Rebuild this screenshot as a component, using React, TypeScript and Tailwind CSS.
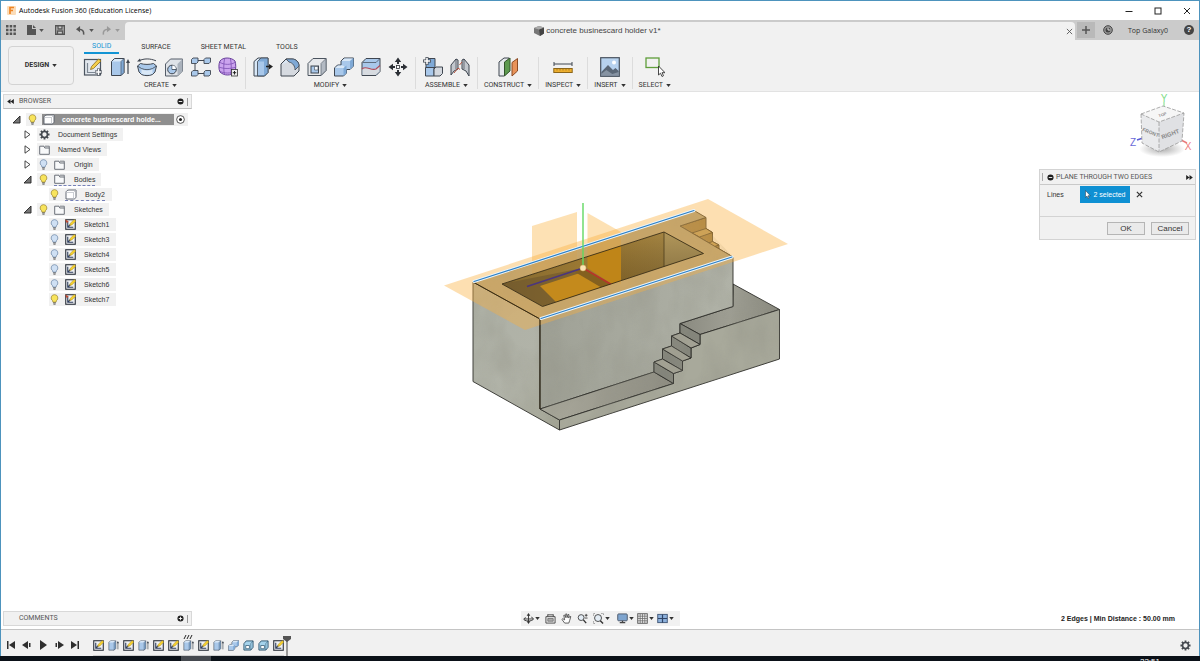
import React from "react"

type IconProps={className?:string}
const INK="#3f4650"
const BLUE="#a9c8ea"
const LIGHT="#d9e8f7"
const MID="#7fa9d6"

const Caret=({className="text-[#333]"}:IconProps)=>(
    <svg viewBox="0 0 6 4" className={`w-[5px] h-[3px] shrink-0 ${className}`} fill="currentColor"><path d="M0 0h6L3 4z"/></svg>
)

/* ---------- feature icons ---------- */
const Sketch=({className="w-5 h-5"}:IconProps)=>(
    <svg viewBox="0 0 20 20" className={className}>
        <rect x="1.5" y="2.5" width="16" height="15.5" fill="#e3e8ee" stroke="#4b545f" strokeWidth="1.2"/>
        <path d="M4.500 6v9.500h9" fill="none" stroke="#7d8793" strokeWidth="1.200"/>
        <path d="M7.500 12.500l1-3 7-7.500 2.500 2-7.500 7.500z" fill="#f5cf4b" stroke="#8a6d1c" strokeWidth=".8"/>
        <path d="M15.500 11.500v7M12 15h7" stroke={INK} strokeWidth="3"/>
        <path d="M15.500 12v6M12.500 15h6" stroke="#fff" strokeWidth="1.600"/>
    </svg>
)
const SmallSketch=({className="w-[11px] h-[11px]",pinned=false}:IconProps & {pinned?:boolean})=>(
    <svg viewBox="0 0 12 12" className={`shrink-0 ${className}`}>
        <rect x=".8" y=".8" width="10.400" height="10.400" fill="#f0f2f4" stroke="#2d333c" strokeWidth="1.200"/>
        <path d="M3 3v6h6M3 9l3-3" fill="none" stroke="#2e3d5c" strokeWidth="1.200"/>
        <path d="M5 7l1-2.500L10 .5 11.800 2.200 7.500 6.500z" fill="#f6d12f" stroke="#a38318" strokeWidth=".5"/>
        {pinned ? <path d="M0 .5l4 2-2 2z" fill="#c2492f"/> : null}
    </svg>
)
const Extrude=({className="w-5 h-5"}:IconProps)=>(
    <svg viewBox="0 0 20 20" className={`shrink-0 ${className}`}>
        <path d="M1.500 4.500l3-3H14v14l-3 3H1.500z" fill={BLUE} stroke={INK}/>
        <path d="M2 4.500l3-2.500h8.500L11 4.500z" fill={LIGHT}/>
        <path d="M11 4.500l3-3v14l-3 3z" fill={MID} stroke={INK} strokeWidth=".6"/>
        <path d="M18 17V4" stroke={INK} strokeWidth="1.200"/>
        <path d="M16 6l2-4 2 4z" fill={INK}/>
    </svg>
)
const Revolve=()=>(
    <svg viewBox="0 0 20 20" className="w-5 h-5">
        <path d="M.5 9l3-2.500c4 1.200 9 1.200 13 0L19.500 9l-1.500 6-2.500 2.500c-3.500 1.500-7.500 1.500-11 0L2 15z" fill={BLUE} stroke={INK}/>
        <path d="M.5 9l4 2.500c3.500 1.500 7.500 1.500 11 0l4-2.500" fill="none" stroke={INK} strokeWidth=".8"/>
        <path d="M4.500 12.500c4 1.200 7 1.200 11 0v4.300c-4 1.200-7 1.200-11 0z" fill={LIGHT}/>
        <path d="M2 3.800c5-2.500 11-2.500 17 0" fill="none" stroke={INK}/>
        <path d="M0 4.600l3-3 .8 3z" fill={INK}/>
    </svg>
)
const Hole=()=>(
    <svg viewBox="0 0 20 20" className="w-5 h-5">
        <path d="M1.500 7l5-5h12v12l-5 5h-12z" fill="#dfe3e8" stroke="#555d68"/>
        <path d="M13.500 7l5-5v12l-5 5z" fill="#aab2bc"/>
        <circle cx="8" cy="12.500" r="4.300" fill={BLUE} stroke={INK}/>
        <path d="M8 8.200v4.300h4.300" fill="none" stroke={INK} strokeWidth=".8"/>
        <path d="M8.400 8.600a4 4 0 0 1 3.500 3.500H8.400z" fill="#fff"/>
    </svg>
)
const Pattern=()=>(
    <svg viewBox="0 0 20 20" className="w-5 h-5">
        <path d="M4 6v7M7 3.500h6M7 16.500h6" stroke={INK}/>
        <g fill={BLUE} stroke={INK} strokeWidth=".9">
            <path d="M.5 2.500l1.500-1.500h5v4L5.500 6.500h-5z"/>
            <path d="M13 2.500L14.500 1h5v4L18 6.500h-5z"/>
            <path d="M.5 15l1.500-1.500h5v4L5.500 19h-5z"/>
            <path d="M13 15l1.500-1.500h5v4L18 19h-5z"/>
        </g>
    </svg>
)
const FormIcon=()=>(
    <svg viewBox="0 0 20 20" className="w-5 h-5">
        <path d="M2 4c3-4 11-4 15 0 1 3 1 8 0 11-4 4-11 4-15 0-1.500-3-1.500-8 0-11z" fill="#cba3ee" stroke="#68409a"/>
        <path d="M2 5.500c5 2.500 10 2.500 15 0M1 10c5 2 11 2 17 0M2 14.500c5 2 10 2 15 0M6.500 2c-1 5-1 11 0 16M12.500 2c1 5 1 11 0 16" fill="none" stroke="#7d50b4" strokeWidth=".8"/>
        <rect x="13.500" y="12.500" width="6" height="6.500" fill="#eee" stroke="#333" strokeWidth=".8"/>
        <path d="M16.500 14v3.500M14.800 15.700h3.400" stroke="#222"/>
    </svg>
)
const PressPull=()=>(
    <svg viewBox="0 0 20 20" className="w-5 h-5">
        <path d="M1 4.500l4-3.500h10v14.500L11.500 19H1z" fill={LIGHT} stroke={INK}/>
        <path d="M4.500 4.500L8 1h7v14.500L11.500 19h-7z" fill={MID} stroke={INK} strokeWidth=".8"/>
        <path d="M5 4.500h6V18H5z" fill={BLUE}/>
        <path d="M13 9.500h3" stroke="#222" strokeWidth="1.500"/><path d="M16 7l4 2.500-4 3z" fill="#222"/>
    </svg>
)
const Fillet=()=>(
    <svg viewBox="0 0 20 20" className="w-5 h-5">
        <path d="M1 7l5-5h6c4 0 7 3 7 7v5l-5 5H1z" fill="#d6dae0" stroke={INK}/>
        <path d="M6 2h6c4 0 7 3 7 7l-4 4c0-4-2-7-6-8z" fill={MID} stroke={INK} strokeWidth=".8"/>
        <path d="M2 7.500l4-4L8 5C5 6 3 7 2 7.500z" fill={LIGHT}/>
    </svg>
)
const Shell=()=>(
    <svg viewBox="0 0 20 20" className="w-5 h-5">
        <path d="M1 6.500l5-5h13v12l-5 5H1z" fill="#e6e8eb" stroke="#4b545f"/>
        <path d="M14 6.500l5-5v12l-5 5z" fill="#b3bac3" stroke="#4b545f" strokeWidth=".6"/>
        <rect x="4" y="9" width="7.500" height="7" fill={BLUE} stroke={INK}/>
        <path d="M7.500 9.500v3.500h3.500V9.500z" fill="#f4f8fc" stroke={INK} strokeWidth=".6"/>
    </svg>
)
const Combine=({className="w-5 h-5"}:IconProps)=>(
    <svg viewBox="0 0 20 20" className={`shrink-0 ${className}`}>
        <path d="M7 4l3-3h9.500v8L16 12.500h-3.500V16L9.500 19h-9v-8L3.500 8H7z" fill={BLUE} stroke={INK}/>
        <path d="M7.500 4l3-2.500h8.500L16 4zM1 11l3-2.500h5L12 11z" fill={LIGHT}/>
        <path d="M16 4l3.500-3v8L16 12.500zM9.500 11l3-2.500V16l-3 3z" fill={MID}/>
    </svg>
)
const Split=()=>(
    <svg viewBox="0 0 20 20" className="w-5 h-5">
        <path d="M1 5.500L5 1.500h14v13l-4 4H1z" fill={BLUE} stroke={INK}/>
        <path d="M1.500 12c4-3 8 1 13 0l4-3v5.500l-4 3.500H1.500z" fill="#d7dbe0"/>
        <path d="M1 12c4-4 9 2 14 0l4-3.500" fill="none" stroke="#b04a5a" strokeWidth="1.200"/>
        <path d="M1.500 5.500h13.500l4-4" fill="none" stroke={INK} strokeWidth=".7"/>
    </svg>
)
const Move=()=>(
    <svg viewBox="0 0 20 20" className="w-5 h-5" fill="#2b2f35">
        <path d="M10 .5l3.200 4.500H6.800zM10 19.500l3.200-4.500H6.800zM.5 10L5 6.800v6.400zM19.500 10L15 6.800v6.400z"/>
        <path d="M9 4h2v3H9zM9 13h2v3H9zM4 9h3v2H4zM13 9h3v2h-3z"/>
        <rect x="8.500" y="8.500" width="3" height="3" fill="#fff" stroke="#2b2f35" strokeWidth=".8"/>
    </svg>
)
const Component=()=>(
    <svg viewBox="0 0 20 20" className="w-5 h-5">
        <path d="M3 3.500l2-2h7v9H3z" fill={MID} stroke={INK}/>
        <path d="M2.500 10.500h8.500V19H2.500z" fill={BLUE} stroke={INK}/>
        <path d="M11 12l2-2h6.500v6.500L17 19h-6z" fill="#d4d8de" stroke={INK}/>
        <path d="M4 0v8M0 4h8" stroke={INK} strokeWidth="3"/><path d="M4 .8v6.400M.8 4h6.400" stroke="#fff" strokeWidth="1.600"/>
    </svg>
)
const Joint=()=>(
    <svg viewBox="0 0 20 20" className="w-5 h-5">
        <path d="M1 8l5-6 2 1v9l-4 2-3 4z" fill="#c3c8ce" stroke={INK}/>
        <path d="M19 8l-5-6-2 1v9l4 2 3 5z" fill="#c3c8ce" stroke={INK}/>
        <path d="M6 2v10M14 2v10" stroke={INK} strokeWidth=".7"/>
        <path d="M4 16l4-5 2 1.500M12 5l-2.500 3" fill="none" stroke="#b5523f"/>
    </svg>
)
const Construct=()=>(
    <svg viewBox="0 0 20 20" className="w-5 h-5">
        <path d="M1 5l5-4h5v13l-5 5H1z" fill="#e6e9ec" stroke={INK}/>
        <path d="M6.500 5L12 1v13l-5.500 5z" fill="#5e9a50" stroke="#34562d"/>
        <path d="M14 5.500l5.500-4V14L14 19z" fill="#e8935a" stroke="#8b4a23"/>
    </svg>
)
const Measure=()=>(
    <svg viewBox="0 0 20 20" className="w-5 h-5">
        <path d="M1 7h18M1 5v4M19 5v4" stroke={INK}/>
        <rect x=".8" y="11.500" width="18.400" height="4" fill="#edaf2f" stroke="#8c661a"/>
        <path d="M4 12v1.500M7 12v1.500M10 12v1.500M13 12v1.500M16 12v1.500" stroke="#8c661a" strokeWidth=".7"/>
    </svg>
)
const Picture=()=>(
    <svg viewBox="0 0 20 20" className="w-5 h-5">
        <rect x=".7" y=".7" width="18.600" height="18.600" fill="#b7d2ee" stroke="#48515d" strokeWidth="1.200"/>
        <circle cx="14" cy="5.500" r="2" fill="#fff"/>
        <path d="M1.300 15L8 8l5 5 2.500-2 3.200 3v4.700H1.300z" fill="#5a6776"/>
        <path d="M1.300 17l5-4 6 4 6.400-2v3.700H1.300z" fill="#8693a2"/>
    </svg>
)
const Select=()=>(
    <svg viewBox="0 0 20 20" className="w-5 h-5">
        <rect x="1" y="1" width="13" height="9.500" fill="none" stroke="#5f9e3a" strokeWidth="1.300"/>
        <path d="M13.500 9v9l2-1.800 1.500 3.300 1.500-.8-1.500-3H20z" fill="#fff" stroke="#333" strokeWidth=".9"/>
    </svg>
)

/* ---------- browser icons ---------- */
const Bulb=({on=false}:{on?:boolean})=>(
    <svg viewBox="0 0 10 12" className="w-[9px] h-[11px] shrink-0">
        <path d="M5 .6a3.700 3.700 0 0 1 2.200 6.700L6.700 9H3.300l-.5-1.700A3.700 3.700 0 0 1 5 .6z" fill={on?"#f8e45c":"#cfe0f4"} stroke={on?"#98812b":"#6883a5"} strokeWidth=".8"/>
        <path d="M3.500 9.800h3M3.800 11.200h2.400" stroke="#555" strokeWidth="1"/>
    </svg>
)
const Folder=()=>(
    <svg viewBox="0 0 11 10" className="w-[11px] h-[10px] shrink-0"><path d="M.7 9.300V1.200h4.300l.8 1.800h4.500v6.300z" fill="#f8f9fa" stroke="#5c626b" strokeWidth=".9"/><path d="M6 1.200h4.300V3" fill="none" stroke="#5c626b" strokeWidth=".8"/></svg>
)
const BodyBox=()=>(
    <svg viewBox="0 0 12 11" className="w-3 h-[11px] shrink-0"><path d="M1 3.500C1 2 2.500 1 4 1h7v6.500C11 9 10 10 8.500 10H1z" fill="#fff" stroke="#555b66" strokeWidth=".9"/><path d="M1 3.500h7.500V10M8.500 3.500L11 1" fill="none" stroke="#b4b9c0" strokeWidth=".7"/></svg>
)
const Gear=({className="w-[11px] h-[11px]"}:IconProps)=>(
    <svg viewBox="0 0 12 12" className={`shrink-0 ${className}`}>
        <path d="M6 .5v11M.5 6h11M2.100 2.100l7.800 7.800M9.900 2.100L2.100 9.900" stroke="#454a50" strokeWidth="2"/>
        <circle cx="6" cy="6" r="3.200" fill="#f1f1f1" stroke="#454a50" strokeWidth="1.700"/>
    </svg>
)
const Arrow=({open}:{open:boolean})=>(
    <svg viewBox="0 0 9 9" className="w-[9px] h-[9px]">
        {open ? <path d="M8 1v7H1z" fill="#777" stroke="#222" strokeWidth=".9"/> : <path d="M2 .8v7.400L7 4.500z" fill="#fff" stroke="#333" strokeWidth=".9"/>}
    </svg>
)
const Dot=({plus=false}:{plus?:boolean})=>(
    <svg viewBox="0 0 8 8" className="w-[7px] h-[7px] shrink-0"><circle cx="4" cy="4" r="3.500" fill="#1f1f1f"/><path d={plus?"M2 4h4M4 2v4":"M2 4h4"} stroke="#fff"/></svg>
)

const groups=[
    {label:"CREATE",icons:[Sketch,Extrude,Revolve,Hole,Pattern,FormIcon]},
    {label:"MODIFY",icons:[PressPull,Fillet,Shell,Combine,Split,Move]},
    {label:"ASSEMBLE",icons:[Component,Joint]},
    {label:"CONSTRUCT",icons:[Construct]},
    {label:"INSPECT",icons:[Measure]},
    {label:"INSERT",icons:[Picture]},
    {label:"SELECT",icons:[Select]},
]

const TitleBar=()=>(
    <header className="flex items-center h-[19px] shrink-0 bg-white pl-1.5 pr-2">
        <svg viewBox="0 0 9 9" className="w-[9px] h-[9px]"><rect width="9" height="9" rx="1" fill="#fbdcb8"/><path d="M3 8V1.500h4M3 4.500h3" fill="none" stroke="#ee8424" strokeWidth="1.700"/></svg>
        <h1 className="ml-[3px] font-['Open_Sans',sans-serif] text-[7px] leading-none text-black">Autodesk Fusion 360 (Education License)</h1>
        <div className="ml-auto flex gap-[21px]">
            <button aria-label="Minimize"><svg viewBox="0 0 8 8" className="w-2 h-2"><path d="M.5 4.500h7" stroke="#222"/></svg></button>
            <button aria-label="Maximize"><svg viewBox="0 0 8 8" className="w-2 h-2"><rect x="1" y="1" width="6" height="6" fill="none" stroke="#222"/></svg></button>
            <button aria-label="Close"><svg viewBox="0 0 8 8" className="w-2 h-2"><path d="M1 1l6 6M7 1L1 7" stroke="#222"/></svg></button>
        </div>
    </header>
)

const TabBar=()=>(
    <div className="flex h-5 shrink-0 bg-[#cbcbcb]">
        <div className="flex items-center w-[124px] pl-[5px] text-[#555]">
            <button aria-label="Data panel"><svg viewBox="0 0 10 10" className="w-[10px] h-[10px]" fill="#555"><path d="M0 0h2.500v2.500H0zM3.700 0h2.500v2.500H3.700zM7.400 0h2.500v2.500H7.400zM0 3.700h2.500v2.500H0zM3.700 3.700h2.500v2.500H3.700zM7.400 3.700h2.500v2.500H7.400zM0 7.400h2.500v2.500H0zM3.700 7.400h2.500v2.500H3.700zM7.400 7.400h2.500v2.500H7.400z"/></svg></button>
            <button aria-label="File" className="ml-[11px] flex items-center gap-[3px]"><svg viewBox="0 0 9 10" className="w-[9px] h-[10px]" fill="#555"><path d="M0 0h5v4h4v6H0z"/><path d="M6 0l3 3H6z"/></svg><Caret className="text-[#555]"/></button>
            <button aria-label="Save" className="ml-[11px]"><svg viewBox="0 0 10 10" className="w-[10px] h-[10px]"><path d="M.7.7h8.600v8.600H.7z" fill="none" stroke="#555" strokeWidth="1.400"/><path d="M3 1v3h4V1M2.500 9V6h5v3" fill="none" stroke="#555" strokeWidth="1.300"/></svg></button>
            <button aria-label="Undo" className="ml-[11px] flex items-center gap-1"><svg viewBox="0 0 10 10" className="w-[9px] h-[9px]"><path d="M4.500 0v7L0 3.500z" fill="#555"/><path d="M3 3.500c4 0 6 2 5.500 6" fill="none" stroke="#555" strokeWidth="1.700"/></svg><Caret className="text-[#555]"/></button>
            <button aria-label="Redo" className="ml-2 flex items-center gap-1"><svg viewBox="0 0 10 10" className="w-[9px] h-[9px]"><path d="M5.500 0v7L10 3.500z" fill="#999"/><path d="M7 3.500c-4 0-6 2-5.500 6" fill="none" stroke="#999" strokeWidth="1.700"/></svg><Caret className="text-[#999]"/></button>
        </div>
        <div className="mt-[2px] flex flex-1 items-center rounded-t-sm bg-[#f1f1f1] pl-1 pr-[2px]">
            <div className="flex flex-1 items-center justify-center gap-[2px]">
                <svg viewBox="0 0 10 10" className="w-[10px] h-[10px]"><path d="M0 2l5-2 5 1.500v6L6 10 0 7z" fill="#777"/><path d="M5 3.500l5-2v6L6 10z" fill="#444"/><path d="M0 2l5-2 5 1.500-5 2z" fill="#aaa"/></svg>
                <span className="text-[8px] leading-none text-[#444]">concrete businescard holder v1*</span>
            </div>
            <button aria-label="Close document"><svg viewBox="0 0 8 8" className="w-[7px] h-[7px]"><path d="M1 1l6 6M7 1L1 7" stroke="#555"/></svg></button>
        </div>
        <div className="flex items-center pr-[5px]">
            <button aria-label="New document" className="ml-[2px] flex h-4 w-[18px] items-center justify-center bg-[#b9b9b9]"><svg viewBox="0 0 8 8" className="w-2 h-2"><path d="M0 4h8M4 0v8" stroke="#555" strokeWidth="1.500"/></svg></button>
            <button aria-label="Job status" className="ml-2"><svg viewBox="0 0 10 10" className="w-[10px] h-[10px]"><circle cx="5" cy="5" r="4.300" fill="#999" stroke="#444"/><circle cx="5" cy="5" r="2.500" fill="#444"/><path d="M5 2.500V5h2.500" fill="none" stroke="#ddd"/></svg></button>
            <button className="ml-[15px] font-['Open_Sans',sans-serif] text-[7px] leading-none text-[#333]">Top Galaxy0</button>
            <button aria-label="Help" className="ml-4 flex h-[10px] w-[10px] items-center justify-center rounded-full bg-[#444] text-[8px] font-bold leading-none text-white">?</button>
        </div>
    </div>
)

const Ribbon=()=>(
    <nav className="flex h-[52px] shrink-0 border-b border-[#e2e2e2] bg-[#f1f1f1] font-['Roboto',sans-serif] text-[7px] leading-none text-[#333]">
        <button className="mt-1.5 ml-[7px] flex h-[39px] w-[66px] items-center justify-center gap-[3px] rounded-sm border border-[#d3d3d3] font-bold">DESIGN <Caret/></button>
        <div className="ml-[2px] flex flex-col">
            <div className="flex h-[14px] gap-3.5 pl-2">
                <button className="border-b-2 border-[#1294d4] px-2 pt-px text-[#1294d4]">SOLID</button>
                <button className="px-2">SURFACE</button>
                <button className="px-2">SHEET METAL</button>
                <button className="px-2">TOOLS</button>
            </div>
            <div className="mt-[3px] flex">
                {groups.map((group)=>(
                    <div key={group.label} className={`flex flex-col items-center justify-between border-r border-[#dcdcdc] last:border-r-0 ${group.icons.length>1?"px-[7px]":"px-1.5"}`}>
                        <div className="flex gap-[7px]">
                            {group.icons.map((Icon,i)=><button key={i} aria-label={`${group.label} ${i+1}`}><Icon/></button>)}
                        </div>
                        <button className="mt-1 flex items-center gap-[3px] leading-[8px]">{group.label} <Caret/></button>
                    </div>
                ))}
            </div>
        </div>
    </nav>
)

interface INode{
    label:string
    depth:1|2
    open?:boolean
    bulb?:boolean
    icon:React.ReactNode
    marked?:boolean
}
const tree:INode[]=[
    {label:"Document Settings",depth:1,open:false,icon:<Gear/>},
    {label:"Named Views",depth:1,open:false,icon:<Folder/>},
    {label:"Origin",depth:1,open:false,bulb:false,icon:<Folder/>},
    {label:"Bodies",depth:1,open:true,bulb:true,icon:<Folder/>,marked:true},
    {label:"Body2",depth:2,bulb:true,icon:<BodyBox/>,marked:true},
    {label:"Sketches",depth:1,open:true,bulb:true,icon:<Folder/>},
    {label:"Sketch1",depth:2,bulb:false,icon:<SmallSketch pinned/>},
    {label:"Sketch3",depth:2,bulb:false,icon:<SmallSketch/>},
    {label:"Sketch4",depth:2,bulb:false,icon:<SmallSketch/>},
    {label:"Sketch5",depth:2,bulb:false,icon:<SmallSketch/>},
    {label:"Sketch6",depth:2,bulb:false,icon:<SmallSketch/>},
    {label:"Sketch7",depth:2,bulb:true,icon:<SmallSketch pinned/>},
]

const Browser=()=>(
    <aside className="ml-[2px] mt-[2px] w-[189px] text-[7px] leading-none text-[#333]">
        <div className="flex h-[15px] items-center border border-[#d8d8d8] border-b-[#bbb] bg-[#f1f1f1] pl-[3px] pr-[2px] font-['Roboto',sans-serif] text-[#555]">
            <svg viewBox="0 0 8 6" className="w-[7px] h-[5px]"><path d="M4 0v6L0 3zM8 0v6L4 3z" fill="#222"/></svg>
            <h2 className="ml-[5px] flex-1">BROWSER</h2>
            <Dot/>
            <span className="ml-[3px] h-2 w-[2px] border-l border-[#999]"/>
        </div>
        <ul className="mt-[3px]">
            <li className="flex h-[15px] items-center pl-[9px]">
                <button aria-label="Collapse" className="w-[14px]"><Arrow open/></button>
                <div className="flex h-[13px] items-center bg-[#f1f1f1] pl-[2px] pr-[3px]">
                    <Bulb on/>
                    <div className="ml-[5px] flex h-[11px] w-[132px] items-center bg-[#8f8f8f] pl-px">
                        <BodyBox/>
                        <span className="ml-[7px] font-bold text-white">concrete businescard holde...</span>
                    </div>
                    <svg viewBox="0 0 10 10" className="ml-[2px] w-[9px] h-[9px]"><circle cx="5" cy="5" r="4.300" fill="#fff" stroke="#333" strokeWidth=".9"/><circle cx="5" cy="5" r="1.700" fill="#222"/></svg>
                </div>
            </li>
            {tree.map((node)=>(
                <li key={node.label} className={`flex h-[15px] items-center ${node.depth===1?"pl-5":"pl-[46px]"}`}>
                    {node.open!==undefined ? <button aria-label={node.open?"Collapse":"Expand"} className="w-[14px]"><Arrow open={node.open}/></button> : null}
                    <div className={`flex h-[13px] items-center bg-[#f1f1f1] ${node.depth===1?"pl-[2px] pr-1.5":"pl-px pr-[7px]"}`}>
                        {node.bulb!==undefined ? <span className="mr-1.5"><Bulb on={node.bulb}/></span> : null}
                        <span className={`flex h-[12px] items-center ${node.bulb===undefined||node.depth===2?"gap-2":"gap-[9px]"} ${node.marked?"border-b border-dashed border-[#7580b8]":""}`}>
                            {node.icon}
                            <span>{node.label}</span>
                        </span>
                    </div>
                </li>
            ))}
        </ul>
    </aside>
)

const ViewCube=()=>(
    <svg viewBox="1124 96 70 70" className="w-[70px] h-[70px]" role="img" aria-label="View cube">
        <defs>
            <radialGradient id="shade"><stop offset="0" stopColor="#777" stopOpacity=".6"/><stop offset="1" stopColor="#777" stopOpacity="0"/></radialGradient>
        </defs>
        <ellipse cx="1160" cy="153" rx="23" ry="8" fill="url(#shade)"/>
        <path d="M1162 106v6" stroke="#7ddc86"/>
        <path d="M1135 144l6-2" stroke="#5b5bd6" strokeWidth="1.500"/>
        <path d="M1179 144l6 3" stroke="#e87979" strokeWidth="1.500"/>
        <path d="M1139 118l22-8 21 7-25 9z" fill="#f6f6f6"/>
        <path d="M1139 118l18 8v30l-17-9z" fill="#e9eaec"/>
        <path d="M1157 126l25-9-2 28-23 11z" fill="#e0e1e4"/>
        <path d="M1139 118l22-8 21 7-25 9zM1157 126v30M1139 118l1 29 17 9 23-11 2-28" fill="none" stroke="#999" strokeWidth=".8" strokeDasharray="4 1.500"/>
        <g className="font-['Liberation_Sans',sans-serif]" textAnchor="middle">
            <g fill="#888" fontWeight="bold">
                <text x="1148" y="138" fontSize="5" transform="rotate(22 1148 138)">FRONT</text>
                <text x="1169" y="140" fontSize="6" transform="rotate(-20 1169 140)">RIGHT</text>
                <text x="1161" y="120" fontSize="4" transform="rotate(-18 1161 120)">TOP</text>
            </g>
            <text x="1162" y="106" fontSize="10" fill="#7ddc86">Y</text>
            <text x="1131" y="150" fontSize="10" fill="#6a6ad8">Z</text>
            <text x="1186" y="154" fontSize="10" fill="#ee7f7f">X</text>
        </g>
    </svg>
)

const PlaneDialog=()=>(
    <section className="mt-[7px] w-[157px] border border-[#d3d3d3] bg-[#f1f1f1] text-[7px] leading-none text-[#333]">
        <div className="flex h-[15px] items-center border-b border-[#c9c9c9] px-[2px] font-['Roboto',sans-serif] text-[#555]">
            <span className="mr-[3px] h-2 w-[2px] border-l border-[#aaa]"/>
            <Dot/>
            <h2 className="ml-[2px] flex-1">PLANE THROUGH TWO EDGES</h2>
            <svg viewBox="0 0 8 6" className="w-[7px] h-[5px]"><path d="M0 0v6l4-3zM4 0v6l4-3z" fill="#222"/></svg>
        </div>
        <div className="flex h-8 items-start border-b border-[#d3d3d3] pl-[7px] pt-px">
            <span className="w-[33px] leading-[17px]">Lines</span>
            <button className="flex h-[17px] w-[50px] items-center justify-center gap-[3px] bg-[#0f90d3] text-white">
                <svg viewBox="0 0 6 9" className="w-[6px] h-[9px]"><path d="M.5.5v7L2 6l1 2.500 1-.5-1-2.300h2.300z" fill="#fff" stroke="#234" strokeWidth=".5"/></svg>
                2 selected
            </button>
            <button aria-label="Clear selection" className="ml-1.5 flex h-[17px] items-center"><svg viewBox="0 0 8 8" className="w-[7px] h-[7px]"><path d="M1 1l6 6M7 1L1 7" stroke="#333" strokeWidth="1.400"/></svg></button>
        </div>
        <div className="flex justify-end gap-1.5 pb-1 pr-1.5 pt-[5px] text-[8px]">
            <button className="h-[13px] w-[38px] border border-[#b5b5b5] bg-[#eaeaea]">OK</button>
            <button className="h-[13px] w-[38px] border border-[#b5b5b5] bg-[#eaeaea]">Cancel</button>
        </div>
    </section>
)

const Model=()=>(
    <svg viewBox="1 92 1198 537" className="absolute inset-0 h-full w-full" role="img" aria-label="Concrete business card holder">
        <defs>
            <linearGradient id="left" x1="0" y1="0" x2="1" y2="1"><stop offset="0" stopColor="#adb0a5"/><stop offset=".6" stopColor="#b1b3a8"/><stop offset="1" stopColor="#a3a494"/></linearGradient>
            <linearGradient id="front" x1="0" y1="0" x2="1" y2="0"><stop offset="0" stopColor="#9fa196"/><stop offset="1" stopColor="#b0b2a7"/></linearGradient>
            <linearGradient id="ledge" x1="0" y1="0" x2="1" y2="0"><stop offset="0" stopColor="#aaa99c"/><stop offset="1" stopColor="#8d8c81"/></linearGradient>
            <linearGradient id="deck" x1="0" y1="0" x2="1" y2="0"><stop offset="0" stopColor="#8a8a80"/><stop offset=".5" stopColor="#9f9f94"/><stop offset="1" stopColor="#88887d"/></linearGradient>
            <linearGradient id="pocket" x1="0" y1="0" x2="1" y2="0"><stop offset="0" stopColor="#85692f"/><stop offset=".5" stopColor="#a07c34"/><stop offset="1" stopColor="#a88b4c"/></linearGradient>
            <linearGradient id="depth" x1="0" y1="0" x2="0" y2="1"><stop offset="0" stopColor="#000" stopOpacity="0"/><stop offset="1" stopColor="#3a2708" stopOpacity=".35"/></linearGradient>
            <filter id="grain" x="0" y="0" width="100%" height="100%">
                <feTurbulence type="fractalNoise" baseFrequency=".035 .02" numOctaves="3" seed="4"/>
                <feColorMatrix values="0 0 0 0 .3  0 0 0 0 .3  0 0 0 0 .25  1.800 0 0 0 -.65"/>
            </filter>
            <clipPath id="body"><path d="M473 282L694 210.500 706 217.500V228.500L733 257V284L779.500 309V359L559.500 430 473 381.500z"/></clipPath>
            <clipPath id="hole"><path d="M502 284L664 232 703.500 253.500 542.500 306.500z"/></clipPath>
        </defs>
        <path d="M532 226L577 212V262L532 276z" fill="#fbb03b" fillOpacity=".38"/>
        <path d="M587.500 213L621 232V284L587.500 264z" fill="#fbb03b" fillOpacity=".38"/>
        <g stroke="#2c2c28" strokeWidth=".9" strokeLinejoin="round">
            <path d="M680 226L706 217.500V228.500L712.500 232.500V241.500L719 245V249L733 257z" fill="#8d7444"/>
            <path d="M692 233L706 228.500 712.500 232.500 699.500 237zM706 244L712.500 241.500 719 245 713 247z" fill="#b79b62"/>
            <path d="M733 284L779.500 309.500 700 334.500 680 323.500 733 306.500z" fill="url(#deck)"/>
            <path d="M473 282L540 319V409L559.500 420V430L473 381.500z" fill="url(#left)"/>
            <path d="M540 319L733 257V306.500L680 323.500V333L671.500 336V346L662.500 349V359L654 362V372L540 409z" fill="url(#front)"/>
            <path d="M540 409L654 372 673.500 383.500 559.500 420z" fill="url(#ledge)"/>
            <path d="M559.500 420L673.500 383.500V373.500L682.500 370.500V361L691 358V348L700 344.500V334.500L779.500 309.500V359L559.500 430z" fill="#a8a99b"/>
            <path d="M680 323.500L700 334.500V344.500L680 333zM671.500 336L691 348V358L671.500 346zM662.500 349L682.500 361V370.500L662.500 359zM654 362L673.500 373.500V383.500L654 372z" fill="#84857b"/>
            <path d="M680 333L700 344.500 691 348 671.500 336zM671.500 346L691 358 682.500 361 662.500 349zM662.500 359L682.500 370.500 673.500 373.500 654 362z" fill="#a3a294"/>
            <path d="M473 282L694 210.500 706 217.500 680 226 733 257 540 319z" fill="#aaa287"/>
        </g>
        <rect x="470" y="205" width="312" height="228" filter="url(#grain)" clipPath="url(#body)" opacity=".45"/>
        <path d="M444 285.500L708 199 788 244 525 330z" fill="#fbb03b" fillOpacity=".4"/>
        <path d="M587.500 213L621 232V284L587.500 264z" clipPath="url(#body)" fill="#f0a020" fillOpacity=".25"/>
        <path d="M532 226L577 212V262L532 276z" clipPath="url(#body)" fill="#f0a020" fillOpacity=".12"/>
        <g clipPath="url(#hole)">
            <path d="M502 284L664 232 703.500 253.500 542.500 306.500z" fill="url(#pocket)"/>
            <path d="M664 232L703.500 253.500 664 267z" fill="#b2975a"/>
            <path d="M502 284L583 268 640 300 542.500 306.500z" fill="#65502b" fillOpacity=".5"/>
            <path d="M587.500 200H621V290L587.500 268z" fill="#bf8518"/>
            <path d="M540 286L583 272 607 288 557 303z" fill="#c48a1c"/>
            <path d="M583 268l44 26-8 4-44-26z" fill="#84601f"/>
            <path d="M621 232H704V290H621z" fill="url(#depth)"/>
            <path d="M664 232v36" stroke="#4b3c1c" strokeWidth=".8"/>
            <path d="M527 286.500L583 268" stroke="#4a357f" strokeWidth="1.400"/>
            <path d="M583 268l36 21" stroke="#b8342a" strokeWidth="1.600"/>
        </g>
        <path d="M502 284L664 232 703.500 253.500 542.500 306.500z" fill="none" stroke="#3a2f17" strokeWidth=".9"/>
        <path d="M473 282L540 319V409" fill="none" stroke="#2c2410" strokeWidth=".9"/>
        <g fill="none" strokeLinecap="round">
            <path d="M474 281.500L694 210.500M541 318.500L732 257" stroke="#e9f4fb" strokeWidth="3"/>
            <path d="M474 281.500L694 210.500M541 318.500L732 257" stroke="#2c7fc4" strokeWidth="1.200"/>
        </g>
        <path d="M583 203v65" stroke="#62d862" strokeWidth="1.400"/>
        <circle cx="583" cy="268" r="3" fill="#fbe3b4" stroke="#d5ac62" strokeWidth=".5"/>
    </svg>
)

const navTools:{name:string,menu:boolean,art:React.ReactNode}[]=[
    {name:"Orbit",menu:true,art:<><path d="M6 0l2 3H4zM6 12l2-3H4z" fill="#333"/><path d="M6 2v8M1 6.500h10" stroke="#333"/><path d="M9 4.500c3 1 3 3 0 3.800-2 .6-5 .5-7-.3-1.500-.8-1.500-2 1-3" fill="none" stroke="#333"/></>},
    {name:"Look at",menu:false,art:<><path d="M1 4h10v7H1zM3 4V1.500M9 4V1.500M3 2h6" fill="none" stroke="#444"/><path d="M3 6h6v3H3z" fill="#aaa" stroke="#444" strokeWidth=".6"/></>},
    {name:"Pan",menu:false,art:<path d="M4 11L1 7l1-.8 2 1.300L3 2.500l1-.3L5.200 5V1h1l.5 4 1-3.500 1 .3L8.300 5.500l1.500-2 .9.500L9.500 8 8.500 11z" fill="#fff" stroke="#444" strokeWidth=".9"/>},
    {name:"Zoom",menu:false,art:<><circle cx="4.500" cy="5" r="3.200" fill="#e4edf5" stroke="#444"/><path d="M7 7.500l3 3.500" stroke="#333" strokeWidth="1.500"/><path d="M8.500 2.500h3M10 1v3M8.500 5.500h3" stroke="#333" strokeWidth=".9"/></>},
    {name:"Fit",menu:true,art:<><circle cx="5.500" cy="5.500" r="3.800" fill="#e4edf5" stroke="#444"/><path d="M8 8.500l3 3" stroke="#333" strokeWidth="1.500"/><path d="M.5 3V.5H3M9 .5h2.500V3M.5 9v2.500H3" fill="none" stroke="#888" strokeDasharray="1.500 1"/></>},
    {name:"Display settings",menu:true,art:<><rect x=".8" y="1" width="10.400" height="7.500" rx="1" fill="#7fa5cf" stroke="#4a5768"/><path d="M3 10.500h6M6 8.500v2" stroke="#444" strokeWidth="1.400"/></>},
    {name:"Grid and snaps",menu:true,art:<><rect x=".8" y=".8" width="10.400" height="10.400" fill="#eee" stroke="#555"/><path d="M3.500 1v10M6 1v10M8.500 1v10M1 3.500h10M1 6h10M1 8.500h10" stroke="#666" strokeWidth=".8"/></>},
    {name:"Viewports",menu:true,art:<><rect x=".8" y="1.500" width="10.400" height="9" fill="#8db1dc" stroke="#3f5575"/><path d="M6 1.500v9M1 6h10" stroke="#2f4568" strokeWidth="1.300"/></>},
]

const NavGroup=({tools,className}:{tools:typeof navTools,className:string})=>(
    <div className={`flex items-center ${className}`}>
        {tools.map((tool)=>(
            <button key={tool.name} aria-label={tool.name} className="flex items-center gap-px">
                <svg viewBox="0 0 12 12" className="w-[11px] h-[11px]">{tool.art}</svg>
                {tool.menu ? <Caret/> : null}
            </button>
        ))}
    </div>
)

const BottomRow=()=>(
    <div className="relative mt-auto grid grid-cols-[1fr_auto_1fr] items-center pb-[3px] text-[7px] leading-none">
        <div className="ml-[2px] flex h-[15px] w-[189px] items-center border border-[#d8d8d8] bg-[#f1f1f1] pl-[15px] pr-[2px] font-['Roboto',sans-serif] text-[#555]">
            <h2 className="flex-1">COMMENTS</h2>
            <Dot plus/>
            <span className="ml-[3px] h-2 w-[2px] border-l border-[#999]"/>
        </div>
        <div className="flex h-[15px] items-center gap-[7px] bg-[#f1f1f1] pl-[2px] pr-1.5">
            <NavGroup tools={navTools.slice(0,5)} className="gap-[5px]"/>
            <NavGroup tools={navTools.slice(5)} className="gap-[3px]"/>
        </div>
        <p className="pr-6 text-right font-bold text-[#222]">2 Edges | Min Distance : 50.00 mm</p>
    </div>
)

const playback=[
    {name:"Go to start",d:"M1 1h1.500v8H1zM9 1v8L3 5z"},
    {name:"Step back",d:"M6 1v8L0 5zM7 3h1.500v4H7z"},
    {name:"Play",d:"M2 0v10l7-5z"},
    {name:"Step forward",d:"M4 1v8l6-4zM1.500 3H3v4H1.500z"},
    {name:"Go to end",d:"M1 1v8l6-4zM7.500 1H9v8H7.500z"},
]
const ShellSmall=()=>(
    <svg viewBox="0 0 12 12" className="w-[11px] h-[11px] shrink-0"><path d="M1 4l2.500-3H11v7l-2.500 3H1z" fill="#a5d3ec" stroke="#2f5670"/><path d="M3 6h4v3.500H3z" fill="#fff" stroke="#2f5670" strokeWidth=".8"/><path d="M8.500 4v7M8.500 4L11 1" fill="none" stroke="#2f5670" strokeWidth=".6"/></svg>
)
const features=["sketch","extrude","sketch","extrude","sketch","sketch","suppressed","sketch","extrude","combine","shell","shell","sketch"]

const Timeline=()=>(
    <footer className="flex h-[27px] shrink-0 items-center border-t border-[#c4c4c4] bg-[#f1f1f1] pl-[5px] pr-2">
        <div className="flex gap-1.5 pt-1">
            {playback.map((p)=>(
                <button key={p.name} aria-label={p.name}><svg viewBox="0 0 10 10" className="w-[10px] h-[10px]"><path d={p.d} fill="#2e2e2e"/></svg></button>
            ))}
        </div>
        <div className="ml-[13px] flex h-[26px] items-center gap-1 border-b border-[#d0d0d0] pt-[5px]">
            {features.map((kind,i)=>(
                <button key={i} aria-label={`Feature ${i+1}`} className="relative">
                    {kind==="sketch" ? <SmallSketch/> : null}
                    {kind==="extrude" || kind==="suppressed" ? <Extrude className="w-[11px] h-[11px]"/> : null}
                    {kind==="combine" ? <Combine className="w-[11px] h-[11px]"/> : null}
                    {kind==="shell" ? <ShellSmall/> : null}
                    {kind==="suppressed" ? <svg viewBox="0 0 10 4" className="absolute -top-[5px] left-0 w-[10px] h-[4px]"><path d="M1 4l2-4M4 4l2-4M7 4l2-4" stroke="#222"/></svg> : null}
                </button>
            ))}
        </div>
        <svg viewBox="0 0 8 20" className="-ml-px mt-[6px] w-2 h-5"><path d="M0 0h8v3L4 6 0 3z" fill="#555"/><path d="M4 5v15" stroke="#444"/></svg>
        <button aria-label="Preferences" className="ml-auto pt-1"><Gear/></button>
    </footer>
)

export default function App(){
    return(
        <div className="flex h-screen flex-col overflow-hidden bg-white font-['Liberation_Sans',Arial,sans-serif]">
            <div className="flex min-h-0 flex-1 flex-col border-x border-t border-[#4d93bd]">
                <TitleBar/>
                <TabBar/>
                <Ribbon/>
                <main className="relative flex min-h-0 flex-1 flex-col">
                    <Model/>
                    <div className="relative flex items-start justify-between">
                        <Browser/>
                        <div className="flex flex-col items-end pr-[3px]">
                            <ViewCube/>
                            <PlaneDialog/>
                        </div>
                    </div>
                    <BottomRow/>
                </main>
                <Timeline/>
            </div>
            <div className="flex h-[5px] shrink-0 items-start overflow-hidden bg-[#0b1118] pr-10">
                <span className="ml-[181px] h-full w-[30px] bg-[#45494f]"/>
                <time className="ml-auto pt-[2px] text-[8px] leading-none text-white">22:51</time>
            </div>
        </div>
    )
}
